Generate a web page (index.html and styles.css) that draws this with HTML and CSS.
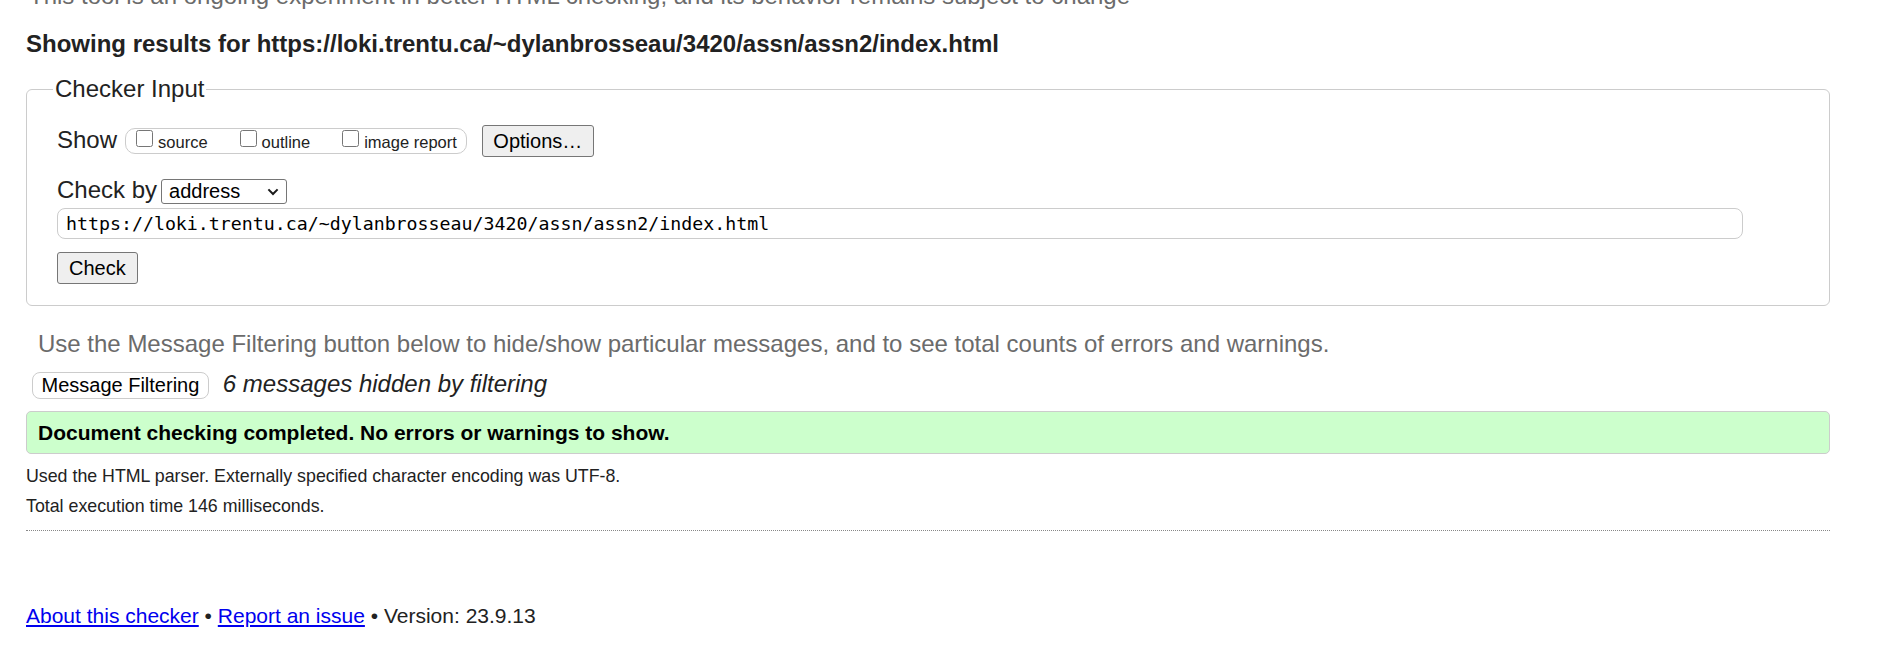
FILE: index.html
```html
<!DOCTYPE html>
<html lang="en">
<head>
<meta charset="utf-8">
<title>Showing results for https://loki.trentu.ca/~dylanbrosseau/3420/assn/assn2/index.html - Nu Html Checker</title>
<link rel="stylesheet" href="styles.css">
</head>
<body>
<main class="page">
  <p class="intro">This tool is an ongoing experiment in better HTML checking, and its behavior remains subject to change</p>
  <h2 class="results-title">Showing results for https://loki.trentu.ca/~dylanbrosseau/3420/assn/assn2/index.html</h2>
  <form class="checker-form">
    <fieldset class="checker">
      <legend class="checker-legend">Checker Input</legend>
      <div class="row show-row">
        <span class="row-label">Show</span>
        <span class="pill">
          <label class="opt"><input type="checkbox" class="cb">source</label><label class="opt"><input type="checkbox" class="cb">outline</label><label class="opt"><input type="checkbox" class="cb">image report</label>
        </span>
        <button type="button" class="btn options-btn">Options…</button>
      </div>
      <div class="row by-row">
        <label class="row-label" for="docselect">Check by</label>
        <span class="select-wrap">
          <select id="docselect" class="select"><option>address</option><option>file upload</option><option>text input</option></select>
          <svg class="chev" width="12" height="8" viewBox="0 0 12 8" aria-hidden="true"><path d="M1.4 1.4 L6 6 L10.6 1.4" fill="none" stroke="#1a1a1a" stroke-width="2"/></svg>
        </span>
      </div>
      <input class="url" type="url" value="https://loki.trentu.ca/~dylanbrosseau/3420/assn/assn2/index.html">
      <button type="submit" class="btn check-btn">Check</button>
    </fieldset>
  </form>
  <p class="filter-hint">Use the Message Filtering button below to hide/show particular messages, and to see total counts of errors and warnings.</p>
  <div class="filter-row">
    <button type="button" class="filter-btn">Message Filtering</button>
    <span class="filter-count">6 messages hidden by filtering</span>
  </div>
  <div class="success"><p class="success-text">Document checking completed. No errors or warnings to show.</p></div>
  <p class="details first">Used the HTML parser. Externally specified character encoding was UTF-8.</p>
  <p class="details">Total execution time 146 milliseconds.</p>
  <hr class="sep">
  <p class="footer"><a href="#">About this checker</a> • <a href="#">Report an issue</a> • Version: 23.9.13</p>
</main>
</body>
</html>
```

FILE: styles.css
```css
* { box-sizing: border-box; }

html { background: #fff; }

body {
  margin: 0;
  font-family: "Liberation Sans", Arial, Helvetica, sans-serif;
  color: #222;
  overflow: hidden;
}

.page {
  margin: 0 52px 0 26px;
}

.intro {
  margin: -18px 0 0 3px;
  font-size: 24px;
  line-height: 28px;
  color: #6b6b6b;
  white-space: nowrap;
}

.results-title {
  margin: 20px 0 0;
  font-size: 24px;
  line-height: 28px;
  font-weight: bold;
}

.checker-form {
  margin: 17px 0 0;
}

.checker {
  margin: 0;
  min-width: 0;
  border: 1px solid #ccc;
  border-radius: 6px;
  padding: 22px 30px 21px 30px;
}

.checker-legend {
  margin-left: -4px;
  padding: 0 2px;
  font-size: 24px;
  line-height: 28px;
}

.row {
  display: flex;
  align-items: baseline;
}

.row-label {
  font-size: 24px;
  line-height: 28px;
}

.show-row .row-label { margin-right: 8px; }

.pill {
  display: inline-block;
  height: 26px;
  line-height: 26px;
  border: 1px solid #ccc;
  border-radius: 10px;
  padding: 0 9px 0 10px;
  font-size: 16.5px;
  white-space: nowrap;
}

.opt { margin-right: 32px; }
.opt:last-child { margin-right: 0; }

.cb {
  width: 17px;
  height: 17px;
  margin: 0 5px 0 0;
  vertical-align: 1px;
}

.btn {
  font-family: "Liberation Sans", Arial, sans-serif;
  font-size: 20px;
  line-height: 22px;
  height: 32px;
  color: #000;
  background: #efefef;
  border: 1px solid #767676;
  border-radius: 3px;
}

.options-btn {
  margin-left: 15px;
  padding: 0 10.5px;
}

.by-row { margin-top: 19px; }

.by-row .row-label { margin-right: 4px; }

.select-wrap {
  position: relative;
  display: inline-block;
}

.select {
  appearance: none;
  -webkit-appearance: none;
  display: block;
  width: 126px;
  height: 25px;
  padding: 0 0 0 7px;
  font-family: "Liberation Sans", Arial, sans-serif;
  font-size: 20px;
  line-height: 22px;
  color: #000;
  background: #fff;
  border: 1px solid #767676;
  border-radius: 3px;
}

.chev {
  position: absolute;
  right: 8px;
  top: 9px;
  pointer-events: none;
}

.url {
  display: block;
  margin-top: 4px;
  width: calc(100% - 56px);
  height: 31px;
  padding: 0 8px;
  font-family: "DejaVu Sans Mono", "Liberation Mono", monospace;
  font-size: 18.25px;
  color: #000;
  border: 1px solid #ccc;
  border-radius: 8px;
  background: #fff;
}

.check-btn {
  display: block;
  margin-top: 13px;
  padding: 0 11px;
}

.filter-hint {
  margin: 24px 0 0 12px;
  font-size: 24px;
  line-height: 28px;
  color: #6b6b6b;
}

.filter-row {
  margin-top: 12px;
  display: flex;
  align-items: baseline;
}

.filter-btn {
  margin-left: 6px;
  height: 27px;
  padding: 0 8.5px;
  font-family: "Liberation Sans", Arial, sans-serif;
  font-size: 20px;
  line-height: 22px;
  color: #000;
  background: #fff;
  border: 1px solid #ccc;
  border-radius: 8px;
}

.filter-count {
  margin-left: 14px;
  font-size: 24px;
  line-height: 28px;
  font-style: italic;
}

.success {
  margin-top: 12px;
  background: #ccffcc;
  border: 1px solid #ccc;
  border-radius: 5px;
  padding: 9px 11px 8px;
}

.success-text {
  margin: 0;
  font-size: 21px;
  line-height: 24px;
  font-weight: bold;
  color: #000;
}

.details {
  margin: 9px 0 0;
  font-size: 17.8px;
  line-height: 21px;
}

.details.first { margin-top: 12px; }

.sep {
  margin: 13px 0 0;
  height: 0;
  border: 0;
  border-top: 1px dotted #888;
}

.footer {
  margin: 73px 0 0;
  font-size: 21px;
  line-height: 24px;
}

.footer a { color: #0000ee; }
```
